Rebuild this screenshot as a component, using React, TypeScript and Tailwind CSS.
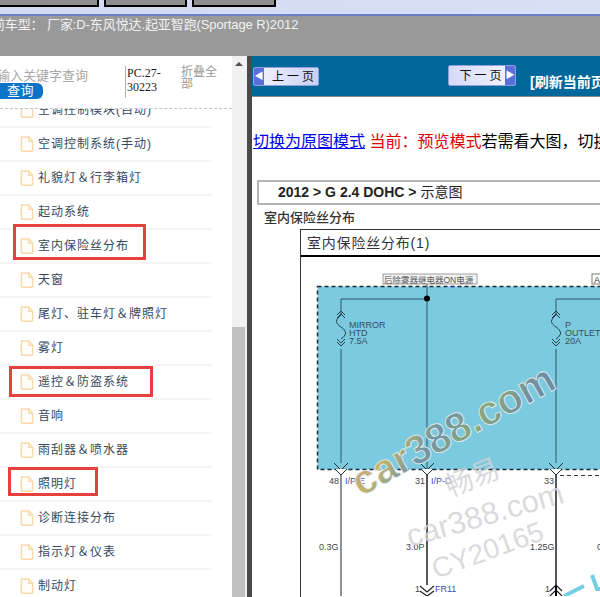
import React from 'react';

const font = { fontFamily: '"Liberation Sans", "Noto Sans CJK SC", sans-serif' };

const rows: { label: string; box?: string }[] = [
    { label: '空调控制模块(自动)' },
    { label: '空调控制系统(手动)' },
    { label: '礼貌灯＆行李箱灯' },
    { label: '起动系统' },
    { label: '室内保险丝分布', box: 'left-[13px] top-[-6px] w-[133px] h-[36px]' },
    { label: '天窗' },
    { label: '尾灯、驻车灯＆牌照灯' },
    { label: '雾灯' },
    { label: '遥控＆防盗系统', box: 'left-[9px] top-[0px] w-[144px] h-[31px]' },
    { label: '音响' },
    { label: '雨刮器＆喷水器' },
    { label: '照明灯', box: 'left-[8px] top-[-1px] w-[90px] h-[29px]' },
    { label: '诊断连接分布' },
    { label: '指示灯＆仪表' },
    { label: '制动灯' },
];

const FileIcon = () => (
    <svg width="14" height="16" viewBox="0 0 15 17" className="shrink-0">
        <path d="M1.5 1h8l4 4.5V15.5a.8.8 0 0 1-.8.8H2.3a.8.8 0 0 1-.8-.8z" fill="#fffdf9" stroke="#f9d9a9" strokeWidth="1.6" />
        <path d="M9.2 1.2v4.5h4.2" fill="none" stroke="#f9d9a9" strokeWidth="1.2" />
    </svg>
);

const Chevron = ({ x, y }: { x: number; y: number }) => (
    <g fill="none" stroke="#1c2b33" strokeWidth="1">
        <path d={`M${x - 7} ${y - 6}L${x} ${y + 1}L${x + 7} ${y - 6}`} />
        <path d={`M${x - 6} ${y}L${x} ${y + 6}L${x + 6} ${y}`} fill="#fff" />
    </g>
);

const Fuse = ({ x, y }: { x: number; y: number }) => (
    <path
        d={`M${x} ${y}v3m-4 1l4 -4l4 4m-8 3l4 -4l4 4m-4 -3c-6 5 -6 8 0 12c6 4 6 8 0 12m-4 0l4 4l4 -4m-8 3l4 4l4 -4`}
        fill="none"
        stroke="#22404f"
        strokeWidth="1"
    />
);

const Wiring = () => (
    <svg viewBox="301 258 299 339" className="block w-[299px] h-[339px]" style={font}>
        <defs>
            <linearGradient id="wm" x1="0" y1="0" x2="1" y2="0.35">
                <stop offset="0" stopColor="#c59b9b" />
                <stop offset="0.25" stopColor="#c2b56a" />
                <stop offset="0.5" stopColor="#6f95a8" />
                <stop offset="0.75" stopColor="#8aa87c" />
                <stop offset="1" stopColor="#6c8fa8" />
            </linearGradient>
        </defs>
        <rect x="317.5" y="287.5" width="290" height="183" fill="#7ccae0" stroke="#1b2a33" strokeWidth="1.5" strokeDasharray="4 3" />
        <path d="M560 476.5H600" stroke="#333" strokeDasharray="4 3" fill="none" />
        <rect x="383" y="275" width="94" height="10" fill="#f3f3f3" stroke="#777" strokeWidth="0.7" />
        <text x="384" y="283.5" fontSize="8.5" fill="#555">后除雾器继电器ON电源</text>
        <rect x="592" y="275" width="12" height="10" fill="#fff" stroke="#444" strokeWidth="0.7" />
        <text x="594" y="284" fontSize="9" fill="#333">A</text>

        <path d="M427 285V471M341 300H427M556 300H600M341 300V312M556 300V312M341 350V464M556 350V464" stroke="#2c5566" strokeWidth="1" fill="none" />
        <circle cx="427" cy="299.5" r="3" fill="#000" />
        <Fuse x={341} y={312} />
        <Fuse x={556} y={312} />
        <g fontSize="9" fill="#33505c">
            <text x="349" y="329">MIRROR</text>
            <text x="349" y="337">HTD</text>
            <text x="349" y="345">7.5A</text>
            <text x="565" y="329">P</text>
            <text x="565" y="337">OUTLET</text>
            <text x="565" y="345">20A</text>
        </g>

        <path d="M341 474V597" stroke="#222" strokeWidth="1" />
        <path d="M427 474V586M556 474V586" stroke="#222" strokeWidth="1.5" />
        <path d="M556 586V597" stroke="#000" strokeWidth="2" />
        <Chevron x={341} y={470} />
        <Chevron x={427} y={470} />
        <Chevron x={556} y={470} />
        <g fontSize="9" fill="#444">
            <text x="329" y="485">48</text>
            <text x="415" y="485">31</text>
            <text x="544" y="485">33</text>
            <text x="319" y="551">0.3G</text>
            <text x="406" y="551">3.0P</text>
            <text x="530" y="551">1.25G</text>
            <text x="597" y="551">0</text>
            <text x="415" y="593">1</text>
            <text x="545" y="593">1</text>
        </g>
        <g fontSize="9" fill="#4a4ab0">
            <text x="345" y="485">I/P-E</text>
            <text x="431" y="485">I/P-D</text>
            <text x="435" y="593">FR11</text>
        </g>
        <path d="M420 587l7 6l7 -6M420 592l7 5l7 -5M550 592l6 -6l6 6M550 597l6 -6l6 6" fill="none" stroke="#222" strokeWidth="1.2" />

        <text x="0" y="0" transform="translate(361 498) rotate(-29)" fontSize="41" fontWeight="700" fill="url(#wm)" stroke="#e9eef0" strokeWidth="0.8">car388.com</text>
        <text x="0" y="0" transform="translate(450 498) rotate(-22)" fontSize="28" fill="#d2d2d6" fillOpacity="0.85">畅易</text>
        <text x="0" y="0" transform="translate(410 548) rotate(-16)" fontSize="31" fill="#d4d4d8" fillOpacity="0.85">car388.com</text>
        <text x="0" y="0" transform="translate(436 580) rotate(-20)" fontSize="28" fill="#d4d4d8" fillOpacity="0.85">CY20165</text>
        <path d="M564 597l20 -10M592 576l5 14h3" fill="none" stroke="#74cfe4" strokeWidth="4" />
    </svg>
);

const App = () => {
    return (
        <div className="w-[600px] h-[597px] overflow-hidden flex flex-col bg-white" style={font}>
            {/* Top strip */}
            <div className="h-[14px] shrink-0 flex items-start gap-[5px] bg-gradient-to-r from-[#d3daf3] to-[#d9dff5]">
                <div className="w-[99px] h-[7px] bg-[#8f8f8f] border-b-2 border-r-2 border-black" />
                <div className="w-[83px] h-[7px] bg-[#8f8f8f] border-b-2 border-x-2 border-black" />
                <div className="w-[84px] h-[7px] bg-[#8f8f8f] border-b-2 border-x-2 border-black" />
            </div>
            <div className="h-[42px] shrink-0 bg-[#999999] border-t-2 border-[#6b80c4] overflow-hidden">
                <p className="-ml-[21px] text-[13px] leading-[18px] tracking-[-0.1px] text-[#f2f2f2] whitespace-nowrap">
                    当前车型： 厂家:D-东风悦达.起亚智跑(Sportage R)2012
                </p>
            </div>

            <div className="flex-1 flex min-h-0">
                {/* Left tree */}
                <aside className="w-[232px] shrink-0 flex flex-col overflow-hidden">
                    <div className="h-[53px] shrink-0 relative z-10 bg-white flex border-b border-dashed border-[#c4c4c4]">
                        <div className="w-[125px] shrink-0 pt-[12px] overflow-hidden">
                            <p className="-ml-[3px] text-[13px] leading-[16px] text-[#a8a8a8] whitespace-nowrap">输入关键字查询</p>
                            <div className="mt-[-1px] w-[43px] h-[16px] bg-[#0b74c8] rounded-r-[6px] text-[13px] leading-[15px] text-white pl-[7px] tracking-[0.5px]">查询</div>
                        </div>
                        <div className="mt-[10px] h-[32px] w-[44px] border-l border-[#b0b0b0] pl-[1px] text-[12px] leading-[14px] text-[#222]" style={{ fontFamily: '"Liberation Serif", serif' }}>
                            PC.27-30223
                        </div>
                        <div className="ml-[12px] mt-[10px] w-[38px] text-[12px] leading-[12px] text-[#999]">折叠全部</div>
                    </div>
                    <ul className="-mt-[15px]">
                        {rows.map((r) => (
                            <li key={r.label} className="relative w-[212px] h-[34px] shrink-0 flex items-center gap-[4px] pl-[20px] border-b-2 border-[#f5f5f5] text-[12px] tracking-[1px] text-[#34495e] whitespace-nowrap">
                                <FileIcon />
                                <span>{r.label}</span>
                                {r.box && <div className={`absolute border-[3px] border-[#e8403f] ${r.box}`} />}
                            </li>
                        ))}
                    </ul>
                </aside>

                {/* Scrollbar */}
                <div className="w-[15px] shrink-0 bg-[#f1f1f1] flex flex-col items-center pl-0 pr-[2px]">
                    <div className="mt-[6px] w-0 h-0 border-x-[4px] border-b-[4px] border-x-transparent border-b-[#505050]" />
                    <div className="mt-[261px] w-full flex-1 bg-[#c1c1c1]" />
                </div>

                {/* Right content */}
                <main className="flex-1 min-w-0 border-l-[5px] border-[#4a4a4a] flex flex-col overflow-hidden">
                    <div className="h-[41px] shrink-0 bg-[#00679a] border-b border-[#8a8a8a] flex items-start pl-[1px] whitespace-nowrap overflow-hidden">
                        <button className="shrink-0 mt-[11px] w-[66px] h-[19px] flex items-center rounded-[2px] border border-[#8fa0e0] bg-gradient-to-r from-[#f4f5ff] to-[#c9d0f3] overflow-hidden">
                            <span className="w-[10px] h-full bg-[#5a6fd8] text-white text-[9px] leading-[16px] text-center">◀</span>
                            <span className="ml-[8px] text-[12px] tracking-[3px] text-[#111]">上一页</span>
                        </button>
                        <button className="shrink-0 ml-[129px] mt-[9px] w-[68px] h-[21px] flex items-center rounded-[2px] border border-[#8fa0e0] bg-gradient-to-r from-[#d5daf8] to-[#f4f5ff] overflow-hidden">
                            <span className="ml-[10px] w-[46px] text-[12px] tracking-[3px] text-[#111]">下一页</span>
                            <span className="ml-auto w-[10px] h-full bg-[#5a6fd8] text-white text-[9px] leading-[18px] text-center">▶</span>
                        </button>
                        <span className="shrink-0 ml-[14px] mt-[17px] text-[14px] leading-[18px] font-bold text-white">[刷新当前页</span>
                    </div>

                    <p className="pt-[34px] pl-[1px] text-[16px] leading-[22px] text-black whitespace-nowrap">
                        <a className="text-[#0000ee] underline">切换为原图模式</a>
                        <span className="text-[#e00000]"> 当前：预览模式</span>若需看大图，切换到原图模式
                    </p>

                    <div className="mt-[27px] ml-[5px] h-[25px] shrink-0 border-2 border-r-0 border-[#b5b5b5] pl-[19px] text-[14px] leading-[21px] font-bold text-[#222] whitespace-nowrap">
                        2012 &gt; G 2.4 DOHC &gt; <span className="font-normal">示意图</span>
                    </div>
                    <p className="mt-[4px] ml-[12px] text-[13px] leading-[18px] font-medium text-[#333]">室内保险丝分布</p>
                    <div className="mt-[2px] ml-[48px] flex-1 border-l border-t border-[#333] flex flex-col min-h-0">
                        <div className="h-[27px] shrink-0 border-b-2 border-black pl-[6px] text-[14px] leading-[26px] text-[#333] tracking-[0.8px] whitespace-nowrap">室内保险丝分布(1)</div>
                        <Wiring />
                    </div>
                </main>
            </div>
        </div>
    );
};

export default App;
